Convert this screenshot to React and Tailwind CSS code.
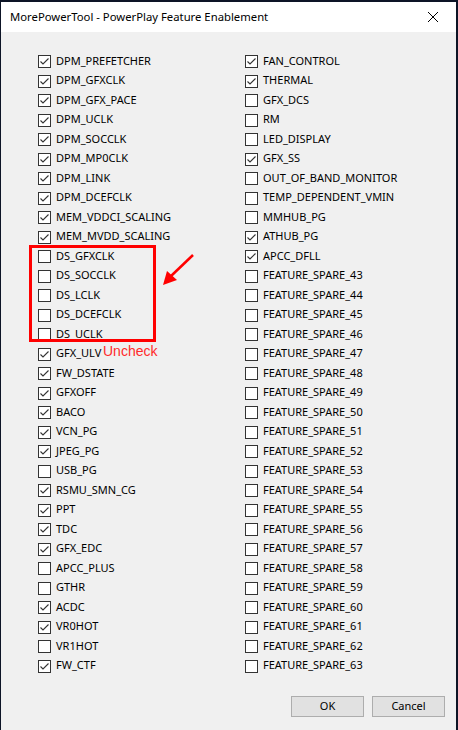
import { Fragment } from 'react'

const LEFT = [
  ['DPM_PREFETCHER', true],
  ['DPM_GFXCLK', true],
  ['DPM_GFX_PACE', true],
  ['DPM_UCLK', true],
  ['DPM_SOCCLK', true],
  ['DPM_MP0CLK', true],
  ['DPM_LINK', true],
  ['DPM_DCEFCLK', true],
  ['MEM_VDDCI_SCALING', true],
  ['MEM_MVDD_SCALING', true],
  ['DS_GFXCLK', false],
  ['DS_SOCCLK', false],
  ['DS_LCLK', false],
  ['DS_DCEFCLK', false],
  ['DS_UCLK', false],
  ['GFX_ULV', true],
  ['FW_DSTATE', true],
  ['GFXOFF', true],
  ['BACO', true],
  ['VCN_PG', true],
  ['JPEG_PG', true],
  ['USB_PG', false],
  ['RSMU_SMN_CG', true],
  ['PPT', true],
  ['TDC', true],
  ['GFX_EDC', true],
  ['APCC_PLUS', false],
  ['GTHR', false],
  ['ACDC', true],
  ['VR0HOT', true],
  ['VR1HOT', false],
  ['FW_CTF', true],
]

const RIGHT = [
  ['FAN_CONTROL', true],
  ['THERMAL', true],
  ['GFX_DCS', false],
  ['RM', false],
  ['LED_DISPLAY', false],
  ['GFX_SS', true],
  ['OUT_OF_BAND_MONITOR', false],
  ['TEMP_DEPENDENT_VMIN', false],
  ['MMHUB_PG', false],
  ['ATHUB_PG', true],
  ['APCC_DFLL', true],
  ...Array.from({ length: 21 }, (_, i) => [`FEATURE_SPARE_${43 + i}`, false]),
]

function Check({ label, checked }) {
  return (
    <div className="h-[19.5px] flex items-center">
      <div className="w-[13px] h-[13px] border border-[#333] bg-white shrink-0 flex items-center justify-center">
        {checked && (
          <svg viewBox="0 0 11 11" className="w-[11px] h-[11px]" fill="none" stroke="#333" strokeWidth="1.1">
            <polyline points="1.5,5.5 4,8 9.5,2.5" />
          </svg>
        )}
      </div>
      <span className="ml-[5px] pb-[3px] text-[11px] leading-none text-black whitespace-nowrap">{label}</span>
    </div>
  )
}

export default function App() {
  return (
    <div
      className="w-[458px] h-[730px] bg-[#0d1426] pt-[2px] pl-[1px] pr-[2px] flex"
      style={{ fontFamily: '"Noto Sans", "Open Sans", sans-serif' }}
    >
      <div className="flex-1 flex flex-col relative">
        <div className="h-[30px] bg-white flex items-center justify-between pl-[9px] pr-[18px] shrink-0">
          <span className="text-[11.3px] text-black">MorePowerTool - PowerPlay Feature Enablement</span>
          <svg viewBox="0 0 10 10" className="w-[10px] h-[10px]" stroke="#000" strokeWidth="1">
            <line x1="0" y1="0" x2="10" y2="10" />
            <line x1="10" y1="0" x2="0" y2="10" />
          </svg>
        </div>
        <div className="flex-1 bg-[#f0f0f0] flex flex-col pt-[20px] pl-[37px]">
          <div className="grid grid-cols-[207px_1fr]">
            {LEFT.map(([l, c], i) => (
              <Fragment key={l}>
                <Check label={l} checked={c} />
                <Check label={RIGHT[i][0]} checked={RIGHT[i][1]} />
              </Fragment>
            ))}
          </div>
          <div className="flex justify-end gap-[8px] pr-[11px] mt-auto mb-[13px]">
            <button className="w-[73px] h-[21px] bg-[#e1e1e1] border border-[#adadad] text-[11px] text-black">OK</button>
            <button className="w-[73px] h-[21px] bg-[#e1e1e1] border border-[#adadad] text-[11px] text-black">Cancel</button>
          </div>
        </div>

        <div className="absolute left-[28px] top-[243px] w-[127px] h-[97px] border-[3px] border-[#ff0000]" />
        <span
          className="absolute left-[102px] top-[342px] text-[14px] leading-none text-[#ff2a2a]"
          style={{ fontFamily: '"Liberation Sans", sans-serif' }}
        >
          Uncheck
        </span>
        <svg className="absolute left-[159px] top-[250px] w-[36px] h-[36px]" viewBox="0 0 36 36">
          <line x1="33" y1="3" x2="10" y2="25" stroke="#ff0000" strokeWidth="2.5" />
          <polygon points="3,33 7,19 17,28" fill="#ff0000" />
        </svg>
      </div>
    </div>
  )
}
